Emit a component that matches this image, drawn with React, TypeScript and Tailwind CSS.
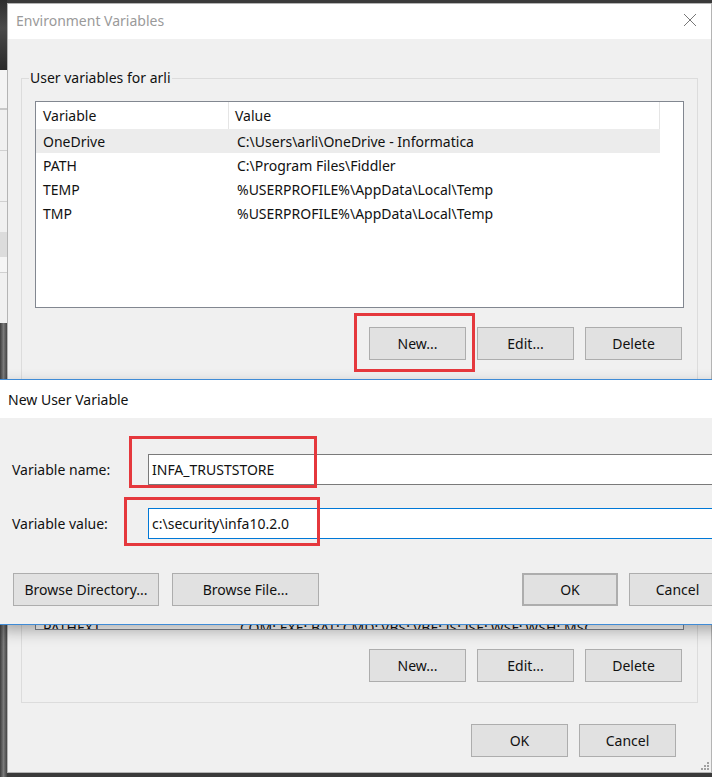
const font = "font-['Segoe_UI','Noto_Sans',sans-serif]";

const userVars = [
    { name: 'OneDrive', value: 'C:\\Users\\arli\\OneDrive - Informatica', selected: true },
    { name: 'PATH', value: 'C:\\Program Files\\Fiddler' },
    { name: 'TEMP', value: '%USERPROFILE%\\AppData\\Local\\Temp' },
    { name: 'TMP', value: '%USERPROFILE%\\AppData\\Local\\Temp' },
];

const systemVars = [
    { name: 'OS', value: 'Windows_NT' },
    { name: 'Path', value: 'C:\\ProgramData\\Oracle\\Java\\javapath;C:\\Windows\\system32' },
    { name: 'PATHEXT', value: '.COM;.EXE;.BAT;.CMD;.VBS;.VBE;.JS;.JSE;.WSF;.WSH;.MSC' },
];

const Button = ({ label, className = '' }: { label: string; className?: string }) => (
    <button className={`h-[33px] bg-[#e1e1e1] border border-[#adadad] text-[14px] text-[#111] ${className}`}>
        {label}
    </button>
);

const VarList = ({ rows, height, header }: { rows: { name: string; value: string; selected?: boolean }[]; height: string; header: boolean }) => (
    <div className={`w-[649px] ${height} bg-white border border-[#828790] overflow-hidden flex flex-col ${header ? '' : 'justify-end'}`}>
        {header && (
            <div className="flex h-[27px] items-center w-[624px] shrink-0">
                <div className="w-[193px] pl-[7px] border-r border-[#e5e5e5] h-full flex items-center">Variable</div>
                <div className="flex-1 pl-[6px] border-r border-[#e5e5e5] h-full flex items-center">Value</div>
            </div>
        )}
        {rows.map((r, i) => (
            <div
                key={r.name}
                className={`flex h-[24px] items-center w-[624px] shrink-0 ${r.selected ? 'bg-[#ececec]' : ''} ${!header && i === rows.length - 1 ? 'mb-[-10px]' : ''}`}
            >
                <div className="w-[193px] pl-[7px]">{r.name}</div>
                <div className="flex-1 pl-[8px] whitespace-nowrap">{r.value}</div>
            </div>
        ))}
    </div>
);

const App = () => {
    return (
        <div className={`relative w-[712px] h-[777px] overflow-hidden bg-[#3a3a3a] text-[14px] text-[#111] ${font}`}>
            {/* desktop strip on the left */}
            <div className="absolute left-0 top-0 w-[7px] h-full flex flex-col">
                <div className="h-[70px] bg-[linear-gradient(180deg,#2e2e2e,#4a4a4a_40%,#2a2a2a)]" />
                <div className="h-[38px] bg-[#f4f4f4]" />
                <div className="h-[2px] bg-[#c8c8c8]" />
                <div className="h-[40px] bg-[#f0f0f0]" />
                <div className="h-[1px] bg-[#d0d0d0]" />
                <div className="h-[50px] bg-[#f0f0f0]" />
                <div className="h-[1px] bg-[#d0d0d0]" />
                <div className="h-[30px] bg-[#f0f0f0]" />
                <div className="h-[25px] bg-[#dcdcdc]" />
                <div className="h-[15px] bg-[#f5f5f5]" />
                <div className="h-[1px] bg-[#d0d0d0]" />
                <div className="h-[50px] bg-[#f0f0f0]" />
                <div className="flex-1 bg-[linear-gradient(90deg,#3d3d3d,#7a7a7a,#444)]" />
            </div>

            {/* Environment Variables window */}
            <div className="absolute left-[7px] top-[3px] w-[705px] h-[770px] bg-[#f0f0f0] border border-[#b4b4b4] flex flex-col">
                <div className="h-[35px] bg-white flex items-center justify-between pl-[8px] pr-[14px] pb-[3px] shrink-0">
                    <span className="text-[#9a9a9a]">Environment Variables</span>
                    <svg width="14" height="14" viewBox="0 0 14 14">
                        <path d="M1 1 L13 13 M13 1 L1 13" stroke="#777" strokeWidth="1" />
                    </svg>
                </div>

                <fieldset className="ml-[13px] mt-[29px] w-[677px] border border-[#dcdcdc] px-[13px] pt-[13px] pb-[21px]">
                    <legend className="-ml-[6px] px-[1px] h-[20px] leading-[20px]">User variables for arli</legend>
                    <VarList rows={userVars} height="h-[207px]" header />
                    <div className="flex justify-end gap-[11px] pr-[2px] mt-[19px]">
                        <Button label="New..." className="w-[97px]" />
                        <Button label="Edit..." className="w-[97px]" />
                        <Button label="Delete" className="w-[97px]" />
                    </div>
                </fieldset>

                <fieldset className="ml-[13px] mt-[14px] w-[677px] border border-[#dcdcdc] px-[13px] pt-[11px] pb-[20px]">
                    <legend className="-ml-[6px] px-[1px] h-[20px] leading-[20px]">System variables</legend>
                    <VarList rows={systemVars} height="h-[203px]" header={false} />
                    <div className="flex justify-end gap-[11px] pr-[2px] mt-[19px]">
                        <Button label="New..." className="w-[97px]" />
                        <Button label="Edit..." className="w-[97px]" />
                        <Button label="Delete" className="w-[97px]" />
                    </div>
                </fieldset>

                <div className="flex justify-end gap-[11px] pr-[35px] mt-[21px]">
                    <Button label="OK" className="w-[97px]" />
                    <Button label="Cancel" className="w-[97px]" />
                </div>

                <svg className="absolute right-[2px] bottom-[2px]" width="9" height="9" viewBox="0 0 9 9">
                    <g fill="#a0a0a0">
                        <rect x="7" y="1" width="2" height="2" />
                        <rect x="4" y="4" width="2" height="2" />
                        <rect x="7" y="4" width="2" height="2" />
                        <rect x="1" y="7" width="2" height="2" />
                        <rect x="4" y="7" width="2" height="2" />
                        <rect x="7" y="7" width="2" height="2" />
                    </g>
                </svg>
            </div>

            {/* New User Variable dialog */}
            <div className="absolute left-0 top-[379px] w-[760px] flex flex-col border-y border-[#3f8bd6] shadow-[0_6px_14px_rgba(0,0,0,0.3)]">
                <div className="h-[38px] bg-white flex items-center pl-[8px]">New User Variable</div>
                <div className="h-[206px] bg-[#f0f0f0] flex flex-col pt-[36px]">
                    <div className="flex items-center pl-[12px]">
                        <span className="w-[136px]">Variable name:</span>
                        <div className="flex-1 h-[31px] bg-white border border-[#7a7a7a] flex items-center pl-[3px]">INFA_TRUSTSTORE</div>
                    </div>
                    <div className="flex items-center pl-[12px] mt-[23px]">
                        <span className="w-[136px]">Variable value:</span>
                        <div className="flex-1 h-[31px] bg-white border border-[#0078d7] flex items-center pl-[3px]">c:\security\infa10.2.0</div>
                    </div>
                    <div className="flex items-center pl-[13px] mt-[34px]">
                        <Button label="Browse Directory..." className="w-[146px]" />
                        <Button label="Browse File..." className="w-[147px] ml-[13px]" />
                        <Button label="OK" className="w-[96px] ml-[203px] border-2 border-[#0078d7]" />
                        <Button label="Cancel" className="w-[97px] ml-[11px]" />
                    </div>
                </div>
            </div>

            {/* red annotation boxes */}
            <div className="absolute left-[354px] top-[313px] w-[121px] h-[59px] border-[3px] border-[#e5383d]" />
            <div className="absolute left-[129px] top-[436px] w-[188px] h-[52px] border-[3px] border-[#e5383d]" />
            <div className="absolute left-[124px] top-[497px] w-[196px] h-[49px] border-[3px] border-[#e5383d]" />
        </div>
    );
};

export default App;
